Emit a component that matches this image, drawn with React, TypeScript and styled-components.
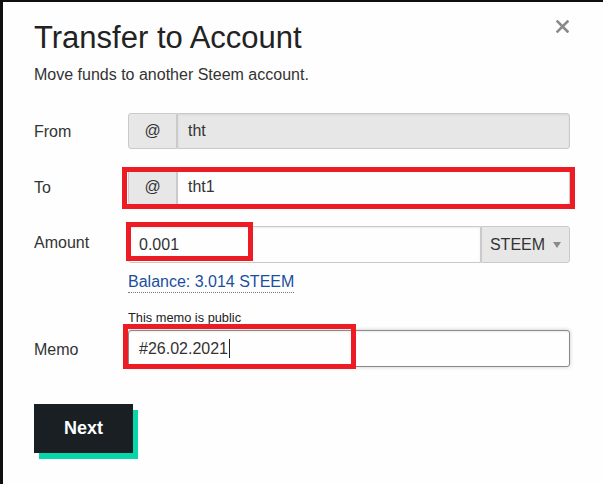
import React from 'react';
import styled, { createGlobalStyle } from 'styled-components';

const GlobalStyle = createGlobalStyle`
  html, body {
    margin: 0;
    padding: 0;
    background: #0d100e;
  }
  * {
    box-sizing: border-box;
  }
`;

const textColor = '#333333';
const borderColor = '#cacaca';
const addonBg = '#e7e7e7';

const Page = styled.div`
  width: 603px;
  height: 484px;
  padding: 2px 0 0 3px;
  overflow: hidden;
  font-family: "Liberation Sans", Arial, sans-serif;
  color: ${textColor};
`;

const Modal = styled.div`
  position: relative;
  height: 482px;
  background: #fefefe;
  padding: 18px 33px 0 31px;
`;

const CloseButton = styled.button`
  position: absolute;
  top: 17px;
  right: 34px;
  width: 14px;
  height: 14px;
  padding: 0;
  border: 0;
  background: none;
  cursor: pointer;
  display: flex;
  align-items: center;
  justify-content: center;
`;

const Title = styled.h2`
  margin: 0;
  font-size: 31px;
  font-weight: 400;
  line-height: 36px;
  color: #222;
`;

const Subtitle = styled.p`
  margin: 7px 0 0;
  font-size: 16px;
  line-height: 24px;
`;

const Form = styled.div`
  margin-top: 26px;
`;

const Row = styled.div<{ $gap?: number }>`
  display: grid;
  grid-template-columns: 94px 1fr;
  align-items: center;
  margin-bottom: ${(p) => p.$gap ?? 0}px;
`;

const Label = styled.div<{ $top?: boolean }>`
  font-size: 16px;
  line-height: 24px;
  align-self: ${(p) => (p.$top ? 'start' : 'center')};
  margin-top: ${(p) => (p.$top ? 5 : 2)}px;
`;

const InputGroup = styled.div<{ $height?: number }>`
  position: relative;
  display: flex;
  height: ${(p) => p.$height ?? 36}px;
`;

const Addon = styled.div<{ $side?: 'left' | 'right'; $width: number }>`
  flex: 0 0 ${(p) => p.$width}px;
  display: flex;
  align-items: center;
  justify-content: center;
  gap: 8px;
  background: ${addonBg};
  border: 1px solid ${borderColor};
  border-radius: ${(p) => (p.$side === 'right' ? '0 3px 3px 0' : '3px 0 0 3px')};
  font-size: 16px;
`;

const Field = styled.div<{ $disabled?: boolean; $focused?: boolean; $rounded?: 'left' | 'right' | 'all' }>`
  flex: 1;
  display: flex;
  align-items: center;
  padding: 0 10px;
  font-size: 16px;
  background: ${(p) => (p.$disabled ? addonBg : '#fefefe')};
  border: 1px solid ${(p) => (p.$focused ? '#8a8a8a' : borderColor)};
  border-radius: ${(p) =>
    p.$rounded === 'all' ? '3px' : p.$rounded === 'left' ? '3px 0 0 3px' : '0 3px 3px 0'};
  box-shadow: inset 0 1px 2px rgba(10, 10, 10, 0.08)${(p) => (p.$focused ? ', 0 0 4px #cacaca' : '')};
`;

const Caret = styled.span`
  display: inline-block;
  width: 1px;
  height: 19px;
  margin-left: 1px;
  background: #222;
`;

const Highlight = styled.div<{ $top: number; $left: number; $width: number; $height: number }>`
  position: absolute;
  top: ${(p) => p.$top}px;
  left: ${(p) => p.$left}px;
  width: ${(p) => p.$width}px;
  height: ${(p) => p.$height}px;
  border: 5px solid #ed1c24;
  pointer-events: none;
`;

const Dropdown = styled.span`
  width: 0;
  height: 0;
  border-left: 4px solid transparent;
  border-right: 4px solid transparent;
  border-top: 6px solid #8a8a8a;
`;

const Balance = styled.a`
  align-self: flex-start;
  margin-top: 9px;
  font-size: 16px;
  line-height: 20px;
  color: #1a4f9e;
  text-decoration: none;
  border-bottom: 1px dotted #7a7a7a;
`;

const Control = styled.div`
  display: flex;
  flex-direction: column;
`;

const Note = styled.div`
  font-size: 12.8px;
  line-height: 16px;
  color: #222;
  margin-bottom: 4px;
`;

const NextButton = styled.button`
  margin-top: 37px;
  width: 99px;
  height: 49px;
  border: 0;
  background: #1a1f24;
  color: #fff;
  font-family: "Liberation Sans", Arial, sans-serif;
  font-size: 18px;
  font-weight: 700;
  box-shadow: 5px 6px 0 #06d6a9;
  cursor: pointer;
`;

const CloseIcon: React.FC = () => (
  <svg width="13" height="13" viewBox="0 0 13 13">
    <path d="M1.5 1.5 L11.5 11.5 M11.5 1.5 L1.5 11.5" stroke="#8a8a8a" strokeWidth="2.6" strokeLinecap="square" />
  </svg>
);

export default function App() {
  return (
    <Page>
      <GlobalStyle />
      <Modal>
        <CloseButton aria-label="close">
          <CloseIcon />
        </CloseButton>
        <Title>Transfer to Account</Title>
        <Subtitle>Move funds to another Steem account.</Subtitle>

        <Form>
          <Row $gap={20}>
            <Label>From</Label>
            <InputGroup>
              <Addon $width={49}>@</Addon>
              <Field $disabled>tht</Field>
            </InputGroup>
          </Row>

          <Row $gap={21}>
            <Label>To</Label>
            <InputGroup>
              <Addon $width={49}>@</Addon>
              <Field>tht1</Field>
              <Highlight $top={-2} $left={-6} $width={453} $height={42} />
            </InputGroup>
          </Row>

          <Row $gap={17}>
            <Label $top>Amount</Label>
            <Control>
              <InputGroup $height={37}>
                <Field $rounded="left">0.001</Field>
                <Addon $side="right" $width={89}>
                  STEEM <Dropdown />
                </Addon>
                <Highlight $top={-4} $left={-2} $width={127} $height={39} />
              </InputGroup>
              <Balance href="#">Balance: 3.014 STEEM</Balance>
            </Control>
          </Row>

          <Row>
            <span />
            <Note>This memo is public</Note>
          </Row>
          <Row>
            <Label>Memo</Label>
            <InputGroup $height={37}>
              <Field $rounded="all" $focused>
                #26.02.2021
                <Caret />
              </Field>
              <Highlight $top={-6} $left={-5} $width={233} $height={45} />
            </InputGroup>
          </Row>
        </Form>

        <NextButton>Next</NextButton>
      </Modal>
    </Page>
  );
}
